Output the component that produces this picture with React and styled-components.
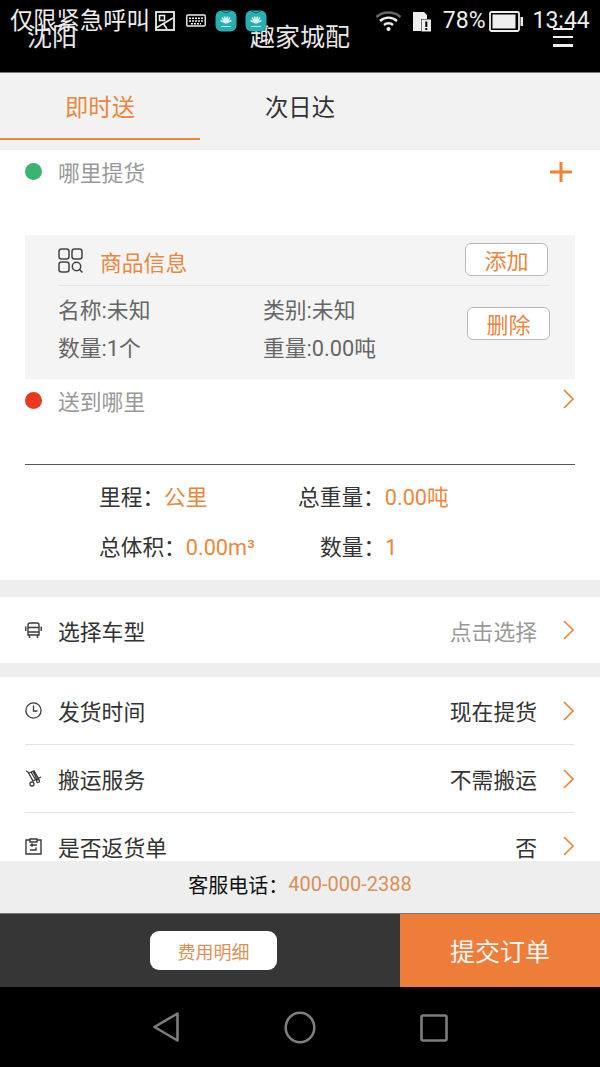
import React from "react";
import styled, { createGlobalStyle } from "styled-components";

const Global = createGlobalStyle`
  html, body { margin: 0; padding: 0; background: #000; }
  * { box-sizing: border-box; }
  body { font-family: "Roboto", "Noto Sans CJK SC", sans-serif; }
`;

const ORANGE = "#e9873f";

const Phone = styled.div`
  position: relative; width: 600px; height: 1067px; overflow: hidden;
  display: flex; flex-direction: column; background: #fff;
`;
const StatusBar = styled.div`
  position: absolute; top: 0; left: 0; right: 0; height: 42px;
  display: flex; align-items: center; padding: 0 10px; color: #eee;
  font-size: 23.3px; z-index: 2;
`;
const StatusText = styled.span`
  line-height: 42px; white-space: nowrap; font-size: ${p => p.$size || 23.3}px;
  margin-left: ${p => p.$ml || 0}px;
`;
const StatusIcon = styled.svg`
  flex: none; display: block; margin-left: ${p => p.$ml || 0}px;
`;
const Header = styled.header`
  height: 73px; flex: none; background: #000; color: #e8e8e8;
  display: grid; grid-template-columns: 1fr auto 1fr; align-items: center;
  padding: 0 27px; font-size: 25px; border-bottom: 1px solid #777;
`;
const HeaderSide = styled.span` line-height: 28px; margin-top: 3px; `;
const Menu = styled.div`
  justify-self: end; width: 20px; height: 19px; margin-top: 2px;
  display: flex; flex-direction: column; justify-content: space-between;
  & > i { display: block; height: 2.5px; background: #eee; }
`;
const Tabs = styled.nav`
  height: 77px; flex: none; background: #f2f2f2; display: flex;
`;
const Tab = styled.div`
  width: 200px; height: 67px; display: flex; align-items: center; justify-content: center;
  font-size: 23.3px; color: ${p => (p.$active ? ORANGE : "#333")};
  border-bottom: 2px solid ${p => (p.$active ? ORANGE : "transparent")};
`;
const AddressRow = styled.div`
  height: ${p => p.$h}px; flex: none; display: flex; align-items: flex-start;
  margin: 0 25px; padding: 9px ${p => (p.$line ? 1 : 3)}px 0 0;
  color: #999; font-size: 21.8px; line-height: 30px;
  border-bottom: ${p => (p.$line ? "1px solid #555" : "none")};
`;
const Dot = styled.span`
  width: 17px; height: 17px; border-radius: 50%; background: ${p => p.$c};
  margin: ${p => p.$mt}px 16px 0 0; flex: none;
`;
const Grow = styled.span` flex: 1; `;
const PlusIcon = styled.svg` flex: none; margin-top: 2px; `;
const ChevronSlot = styled.span` display: flex; margin-top: 0; `;
const GoodsCard = styled.section`
  height: 144px; flex: none; margin: 0 25px; background: #f4f4f4;
  padding: 0 25px 0 33px; display: flex; flex-direction: column;
`;
const GoodsHead = styled.div`
  height: 51px; flex: none; display: flex; align-items: center; border-bottom: 1px solid #e4e4e4;
  padding-right: 2px;
`;
const GoodsTitle = styled.span`
  font-size: 21.8px; color: ${ORANGE}; margin-left: 17px; flex: 1; padding-top: 2px;
`;
const OutlineButton = styled.div`
  width: 83px; height: 33px; border: 1px solid #b9b9b9; border-radius: 6px; background: #fff;
  color: ${ORANGE}; font-size: 22px; display: flex; align-items: center; justify-content: center;
  margin-top: ${p => p.$mt || 0}px; flex: none; padding-bottom: 2px;
`;
const GoodsBody = styled.div`
  flex: 1; display: flex; align-items: flex-start;
`;
const GoodsGrid = styled.div`
  flex: 1; display: grid; grid-template-columns: 205px 1fr; grid-auto-rows: 38px; padding-top: 6px;
  color: #666; font-size: 21.8px; line-height: 38px;
`;
const Stats = styled.section`
  height: 115px; flex: none; padding-top: 14px; display: flex; flex-direction: column;
`;
const StatRow = styled.div`
  height: 50px; flex: none; display: flex; font-size: 21.7px; line-height: 38px; color: #333;
`;
const Stat = styled.span`
  display: inline-block; white-space: nowrap; margin-left: ${p => p.$ml}px; width: ${p => p.$w}px;
`;
const Val = styled.span` color: ${ORANGE}; `;
const Gap = styled.div` height: ${p => p.$h}px; flex: none; background: #eeeeee; `;
const Row = styled.div`
  height: ${p => p.$h}px; flex: none; display: flex; align-items: center; margin: 0 26px 0 25px;
  border-bottom: ${p => (p.$line ? "1px solid #e2e2e2" : "none")};
  font-size: 21.8px; color: #333; padding-top: ${p => p.$pt || 0}px; overflow: hidden;
`;
const RowIcon = styled.svg` width: 17px; height: 17px; flex: none; margin-right: 16px; color: #3a3a3a; `;
const RowValue = styled.span` color: ${p => (p.$muted ? "#999" : "#333")}; margin-right: 25px; `;
const Chevron = styled.svg` width: 13px; height: 22px; flex: none; margin-right: -1px; `;
const Hotline = styled.div`
  height: 52px; flex: none; background: #eeeeee; display: flex; align-items: center; justify-content: center;
  font-size: 20px; color: #111; padding-bottom: 6px;
`;
const HotlineNum = styled.span` color: #d9905c; `;
const Footer = styled.footer`
  height: 74px; flex: none; display: flex; background: #363636; border-top: 1px solid #777;
`;
const FeeArea = styled.div` width: 400px; display: flex; align-items: center; padding-left: 150px; `;
const FeeButton = styled.div`
  width: 127px; height: 39px; border-radius: 9px; background: #fff; color: #dc9159; font-size: 18px;
  display: flex; align-items: center; justify-content: center;
`;
const Submit = styled.div`
  flex: 1; background: #ee7d39; color: #f5f5f5; font-size: 25px; padding-bottom: 1px;
  display: flex; align-items: center; justify-content: center;
`;
const NavBar = styled.div`
  flex: 1; background: #000; display: flex; align-items: flex-start; padding: 24px 0 0 152px;
`;
const NavIcon = styled.svg` flex: none; margin-right: ${p => p.$mr}px; margin-top: ${p => p.$mt || 0}px; `;

const Arrow = () => (
  <Chevron viewBox="0 0 13 22">
    <path d="M2 2 L11 11 L2 20" fill="none" stroke={ORANGE} strokeWidth="1.7" />
  </Chevron>
);

const Huawei = ({ ml }) => (
  <StatusIcon $ml={ml} width="22" height="22" viewBox="0 0 22 22">
    <rect x="0.5" y="0.5" width="21" height="21" rx="6" fill="#27b0b2" />
    <path d="M11 13 L7 7.5 M11 13 L9.5 6.5 M11 13 L12.5 6.5 M11 13 L15 7.5 M11 13 L5.5 10.5 M11 13 L16.5 10.5" stroke="#d9f1f0" strokeWidth="1.6" />
    <rect x="6" y="16" width="10" height="1" fill="#bfe6e6" />
    <path d="M6 0.5 Q11 5 16 0.5" fill="none" stroke="#0d6a6c" strokeWidth="1" />
  </StatusIcon>
);

export default function App() {
  return (
    <Phone>
      <Global />
      <StatusBar>
        <StatusText>仅限紧急呼叫</StatusText>
        <StatusIcon $ml={5} width="20" height="20" viewBox="0 0 20 20">
          <rect x="1" y="1" width="18" height="18" fill="none" stroke="#eee" strokeWidth="1.8" />
          <path d="M1 17 L18 7 M4.5 4.5 h5 v5 h-5 z M12 18 L8 12" fill="none" stroke="#eee" strokeWidth="1.6" />
        </StatusIcon>
        <StatusIcon $ml={11} width="20" height="14" viewBox="0 0 20 14">
          <rect x="0.8" y="1" width="18.4" height="11" rx="1" fill="none" stroke="#eee" strokeWidth="1.4" />
          <path d="M3 4.2 h14 M3 7 h14 M5 9.8 h10" stroke="#eee" strokeWidth="1.4" strokeDasharray="2 1" />
        </StatusIcon>
        <Huawei ml={9} />
        <Huawei ml={8} />
        <StatusIcon $ml={108} width="27" height="22" viewBox="0 0 27 22">
          <path d="M1.5 7 C8 1 19 1 25.5 7" fill="none" stroke="#666" strokeWidth="2.4" />
          <path d="M5 11 C10 6.5 17 6.5 22 11 M9 15 C11.5 12.7 15.5 12.7 18 15" fill="none" stroke="#eee" strokeWidth="2.4" />
          <circle cx="13.5" cy="19" r="2" fill="#eee" />
        </StatusIcon>
        <StatusIcon $ml={10} width="20" height="21" viewBox="0 0 20 21">
          <path d="M1 20 V1 H12 L15 4 V8 H9 V20 Z" fill="#eee" />
          <rect x="9.5" y="8.5" width="9.5" height="12" fill="#eee" />
          <rect x="13.3" y="10.5" width="2" height="5.5" fill="#000" />
          <rect x="13.3" y="17" width="2" height="2" fill="#000" />
        </StatusIcon>
        <StatusText $ml={11} $size={23}>78%</StatusText>
        <StatusIcon $ml={4} width="35" height="21" viewBox="0 0 35 21">
          <rect x="1" y="1" width="29" height="19" rx="1.5" fill="none" stroke="#eee" strokeWidth="1.8" />
          <rect x="3.5" y="3.5" width="23" height="14" fill="#eee" />
          <rect x="31.5" y="6" width="2.5" height="9" fill="#eee" />
        </StatusIcon>
        <StatusText $ml={8} $size={23}>13:44</StatusText>
      </StatusBar>

      <Header>
        <HeaderSide>沈阳</HeaderSide>
        <HeaderSide>趣家城配</HeaderSide>
        <Menu><i /><i /><i /></Menu>
      </Header>

      <Tabs>
        <Tab $active>即时送</Tab>
        <Tab>次日达</Tab>
      </Tabs>

      <AddressRow $h={85}>
        <Dot $c="#3cb371" $mt={4} />
        <span>哪里提货</span>
        <Grow />
        <PlusIcon width="22" height="22" viewBox="0 0 22 22">
          <path d="M0 11 H22 M11 1 V21" stroke="#ef8234" strokeWidth="3" />
        </PlusIcon>
      </AddressRow>

      <GoodsCard>
        <GoodsHead>
          <svg width="25" height="25" viewBox="0 0 25 25" fill="none" stroke="#444" strokeWidth="1.5">
            <rect x="1" y="1" width="10" height="10" rx="2.5" />
            <rect x="14" y="1" width="10" height="10" rx="2.5" />
            <rect x="1" y="14" width="10" height="10" rx="2.5" />
            <circle cx="18.5" cy="18.5" r="4.2" />
            <path d="M21.5 21.5 L24.5 24.5" />
          </svg>
          <GoodsTitle>商品信息</GoodsTitle>
          <OutlineButton $mt={-1}>添加</OutlineButton>
        </GoodsHead>
        <GoodsBody>
          <GoodsGrid>
            <span>名称:未知</span>
            <span>类别:未知</span>
            <span>数量:1个</span>
            <span>重量:0.00吨</span>
          </GoodsGrid>
          <OutlineButton $mt={21}>删除</OutlineButton>
        </GoodsBody>
      </GoodsCard>

      <AddressRow $h={86} $line>
        <Dot $c="#e8391f" $mt={4} />
        <span>送到哪里</span>
        <Grow />
        <ChevronSlot><Arrow /></ChevronSlot>
      </AddressRow>

      <Stats>
        <StatRow>
          <Stat $ml={99} $w={199}>里程：<Val>公里</Val></Stat>
          <Stat $ml={0} $w={300}>总重量：<Val>0.00吨</Val></Stat>
        </StatRow>
        <StatRow>
          <Stat $ml={99} $w={221}>总体积：<Val>0.00m³</Val></Stat>
          <Stat $ml={0} $w={200}>数量：<Val>1</Val></Stat>
        </StatRow>
      </Stats>

      <Gap $h={17} />

      <Row $h={66}>
        <RowIcon viewBox="0 0 17 17" fill="none" stroke="currentColor" strokeWidth="1.4">
          <path d="M3 3 Q3 1 5 1 H12 Q14 1 14 3 V13 H3 Z M0.8 4.5 V9 M16.2 4.5 V9 M3 5.5 H14 M3 10 H14 M4.5 13 V16 M12.5 13 V16" />
        </RowIcon>
        <span>选择车型</span>
        <Grow />
        <RowValue $muted>点击选择</RowValue>
        <Arrow />
      </Row>

      <Gap $h={14} />

      <Row $h={68} $line>
        <RowIcon viewBox="0 0 17 17" fill="none" stroke="currentColor" strokeWidth="1.3">
          <circle cx="8.5" cy="8.5" r="7.6" />
          <path d="M8.5 3.5 V9 H12.5" />
        </RowIcon>
        <span>发货时间</span>
        <Grow />
        <RowValue>现在提货</RowValue>
        <Arrow />
      </Row>
      <Row $h={68} $line>
        <RowIcon viewBox="0 0 17 17" fill="none" stroke="currentColor" strokeWidth="1.3">
          <path d="M1 1 L3 2 L8 11 M4 3 L9 0.8 L13.5 8.5 L8 11 M6 2 L10.5 9.5 M8 1.5 L12 9 M7.5 11 L16 7" />
          <circle cx="7" cy="14" r="2" />
          <circle cx="13" cy="11" r="1.5" />
        </RowIcon>
        <span>搬运服务</span>
        <Grow />
        <RowValue>不需搬运</RowValue>
        <Arrow />
      </Row>
      <Row $h={48} $pt={18}>
        <RowIcon viewBox="0 0 17 17" fill="none" stroke="currentColor" strokeWidth="1.4">
          <path d="M5 2 H1 V16 H16 V2 H12 M5 1 H12 V4 H5 Z M12 7 H6 L7.5 5.5 M6 7 L7.5 8.5 M5 12 H11 V9.5" />
        </RowIcon>
        <span>是否返货单</span>
        <Grow />
        <RowValue>否</RowValue>
        <Arrow />
      </Row>

      <Hotline>
        客服电话：<HotlineNum>400-000-2388</HotlineNum>
      </Hotline>

      <Footer>
        <FeeArea><FeeButton>费用明细</FeeButton></FeeArea>
        <Submit>提交订单</Submit>
      </Footer>

      <NavBar>
        <NavIcon $mr={104} width="28" height="32" viewBox="0 0 28 32">
          <path d="M25.5 2.5 V29.5 L2.5 16 Z" fill="none" stroke="#7d7d7d" strokeWidth="2.6" strokeLinejoin="round" />
        </NavIcon>
        <NavIcon $mr={104} width="32" height="33" viewBox="0 0 32 33">
          <ellipse cx="16" cy="16.5" rx="14.3" ry="14.8" fill="none" stroke="#7d7d7d" strokeWidth="2.6" />
        </NavIcon>
        <NavIcon $mr={0} $mt={3} width="28" height="28" viewBox="0 0 28 28">
          <rect x="1.5" y="1.5" width="25" height="25" rx="1.5" fill="none" stroke="#7d7d7d" strokeWidth="2.6" />
        </NavIcon>
      </NavBar>
    </Phone>
  );
}
